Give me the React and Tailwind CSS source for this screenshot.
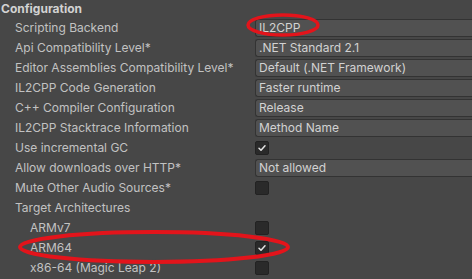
import React from 'react';

const rows = [
    { label: 'Scripting Backend', field: 'IL2CPP' },
    { label: 'Api Compatibility Level*', field: '.NET Standard 2.1' },
    { label: 'Editor Assemblies Compatibility Level*', field: 'Default (.NET Framework)' },
    { label: 'IL2CPP Code Generation', field: 'Faster runtime' },
    { label: 'C++ Compiler Configuration', field: 'Release' },
    { label: 'IL2CPP Stacktrace Information', field: 'Method Name' },
    { label: 'Use incremental GC', check: true },
    { label: 'Allow downloads over HTTP*', field: 'Not allowed' },
    { label: 'Mute Other Audio Sources*', check: false },
    { label: 'Target Architectures' },
    { label: 'ARMv7', check: false, indent: true },
    { label: 'ARM64', check: true, indent: true },
    { label: 'x86-64 (Magic Leap 2)', check: false, indent: true },
];

function Checkbox({ checked }) {
    return (
        <div className="w-[14px] h-[14px] rounded-[2px] bg-[#2a2a2a] border border-[#222] flex items-center justify-center">
            {checked && (
                <svg width="10" height="10" viewBox="0 0 10 10">
                    <path d="M2 5.2 L4 7.2 L8 2.8" fill="none" stroke="#e4e4e4" strokeWidth="1.5" strokeLinecap="round" strokeLinejoin="round" />
                </svg>
            )}
        </div>
    );
}

function Row({ row }) {
    return (
        <div className="flex items-center h-[20px]">
            <div className={`w-[255px] shrink-0 ${row.indent ? 'pl-[30px]' : 'pl-[15px]'} text-[#c2c2c2] whitespace-nowrap`}>
                {row.label}
            </div>
            <div className="flex-1 flex items-center">
                {row.field && (
                    <div className="flex-1 h-[18px] bg-[#515151] border border-r-0 border-[#333] rounded-l-[3px] pl-[3px] flex items-center text-[#d2d2d2] whitespace-nowrap">
                        {row.field}
                    </div>
                )}
                {row.check !== undefined && <Checkbox checked={row.check} />}
            </div>
        </div>
    );
}

export default function App() {
    return (
        <div className="relative w-[472px] h-[279px] overflow-hidden bg-[#474747] text-[12px]" style={{ fontFamily: 'Inter, "Noto Sans", sans-serif' }}>
            <div className="h-[18px] pl-[1px] flex items-center font-bold text-[#d2d2d2] text-[12px]">Configuration</div>
            {rows.map(r => <Row key={r.label} row={r} />)}

            {/* red annotation circles */}
            <svg className="absolute inset-0 pointer-events-none" width="472" height="279">
                <ellipse cx="283" cy="25" rx="35" ry="10" fill="none" stroke="#e3141b" strokeWidth="3.5" />
                <ellipse cx="154" cy="247" rx="134" ry="15" fill="none" stroke="#e3141b" strokeWidth="4" />
            </svg>
        </div>
    );
}
